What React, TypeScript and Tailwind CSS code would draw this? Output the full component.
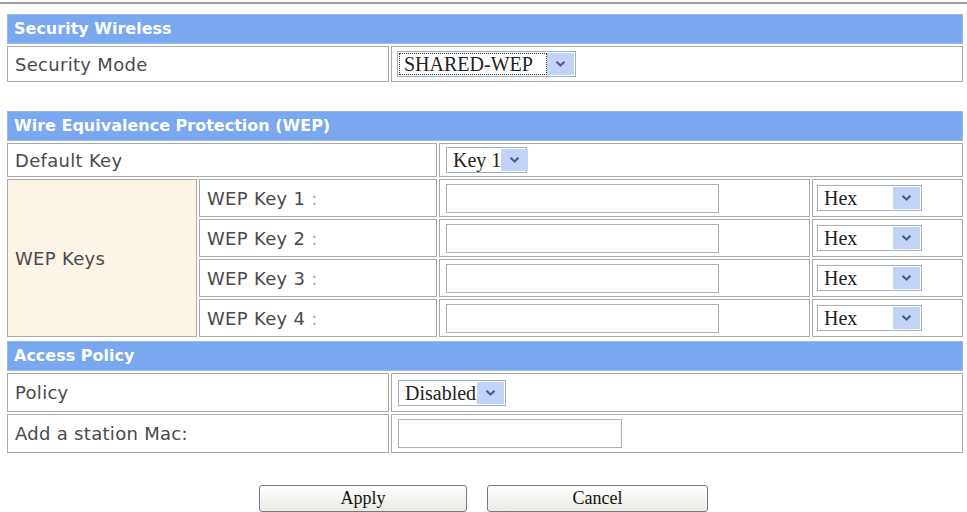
import type { ReactNode } from "react";

const cell = "flex items-center border border-[#a9a9a9] bg-white";
const label = "pl-[7px] text-[18px] tracking-[0.3px] text-[#4a4a4a]";
const head =
  "col-span-full flex h-[30px] items-center border border-[#9db8e0] bg-[#7aa8f0] pl-[6px] text-[16px] font-bold text-white";

function Arrow() {
  return (
    <span className="flex h-full w-[27px] shrink-0 items-center justify-center bg-[#c2d3fa]">
      <svg width="11" height="8" viewBox="0 0 11 8">
        <path d="M1.5 1.8 L5.5 5.6 L9.5 1.8" fill="none" stroke="#4b5f8c" strokeWidth="2.2" />
      </svg>
    </span>
  );
}

function Select({ value, width, focus }: { value: string; width: number; focus?: boolean }) {
  return (
    <div
      className="flex h-[26px] items-center whitespace-nowrap border border-[#9fb0c5] bg-white p-[1px] font-['Liberation_Serif',serif] text-[20px] leading-none text-[#222]"
      style={{ width }}
    >
      <span
        className={
          focus
            ? "flex h-full flex-1 items-center border border-dotted border-[#333] pl-[4px]"
            : "flex h-full flex-1 items-center pl-[5px]"
        }
      >
        {value}
      </span>
      <Arrow />
    </div>
  );
}

function TextBox({ width }: { width: number }) {
  return <div className="h-[29px] border border-[#a8b0ba] bg-white" style={{ width }} />;
}

function Btn({ children, width }: { children: ReactNode; width: number }) {
  return (
    <button
      className="flex h-[27px] items-center justify-center rounded-[3px] border border-[#6f7c88] bg-gradient-to-b from-white to-[#ebe9e2] font-['Liberation_Serif',serif] text-[18px] text-[#111]"
      style={{ width }}
    >
      {children}
    </button>
  );
}

export default function App() {
  return (
    <div className="h-[512px] w-[967px] overflow-hidden bg-white pt-[2px] font-['DejaVu_Sans',sans-serif]">
      <div className="h-[2px] bg-[#9c9c9c]" />

      <div className="mx-[7px] mt-[10px] w-[956px]">
        {/* Security Wireless */}
        <div className="grid grid-cols-[382px_572px] gap-[2px]">
          <div className={head}>Security Wireless</div>
          <div className={`${cell} h-[36px]`}>
            <span className={label}>Security Mode</span>
          </div>
          <div className={`${cell} h-[36px] pl-[5px]`}>
            <Select value="SHARED-WEP" width={179} focus />
          </div>
        </div>

        {/* WEP */}
        <div className="mt-[29px] grid grid-cols-[190px_238px_371px_151px] gap-[2px]">
          <div className={head}>Wire Equivalence Protection (WEP)</div>
          <div className={`${cell} col-span-2 h-[34px]`}>
            <span className={label}>Default Key</span>
          </div>
          <div className={`${cell} col-span-2 h-[34px] pl-[6px]`}>
            <Select value="Key 1" width={81} />
          </div>

          <div className="row-span-4 flex items-center border border-[#a9a9a9] bg-[#fcf5e7]">
            <span className={label}>WEP Keys</span>
          </div>
          {[1, 2, 3, 4].map((n) => (
            <div key={n} className="contents">
              <div className={`${cell} h-[38px]`}>
                <span className={label}>
                  WEP Key {n} <span className="text-[#aaa]">:</span>
                </span>
              </div>
              <div className={`${cell} h-[38px] pl-[6px]`}>
                <TextBox width={273} />
              </div>
              <div className={`${cell} h-[38px] pl-[4px]`}>
                <Select value="Hex" width={105} />
              </div>
            </div>
          ))}
        </div>

        {/* Access Policy */}
        <div className="mt-[4px] grid grid-cols-[382px_572px] gap-[2px]">
          <div className={head}>Access Policy</div>
          <div className={`${cell} h-[39px]`}>
            <span className={label}>Policy</span>
          </div>
          <div className={`${cell} h-[39px] pl-[6px]`}>
            <Select value="Disabled" width={108} />
          </div>
          <div className={`${cell} h-[39px]`}>
            <span className={label}>Add a station Mac:</span>
          </div>
          <div className={`${cell} h-[39px] pl-[6px]`}>
            <TextBox width={224} />
          </div>
        </div>
      </div>

      <div className="mt-[32px] flex gap-[20px] pl-[259px]">
        <Btn width={208}>Apply</Btn>
        <Btn width={221}>Cancel</Btn>
      </div>
    </div>
  );
}
